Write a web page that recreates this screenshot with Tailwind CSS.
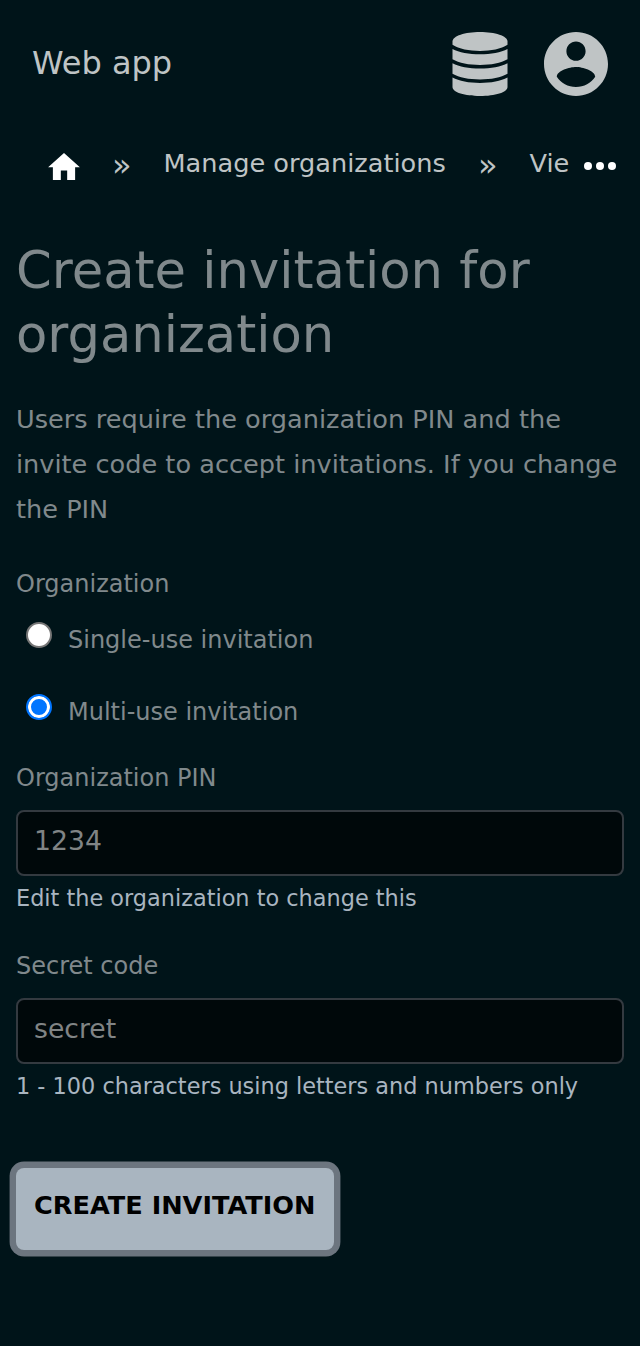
<!DOCTYPE html>
<html lang="en">
<head>
<meta charset="utf-8">
<title>Web app</title>
<script src="https://cdn.jsdelivr.net/npm/@tailwindcss/browser@4"></script>
</head>
<body class="min-h-[1346px] bg-[#001419] font-['DejaVu_Sans',sans-serif] text-[#80898c]">
<header class="flex h-32 items-center justify-between px-8 text-[#bfc4c5]">
  <a class="-mt-[2px] text-[32px] leading-10">Web app</a>
  <div class="flex items-center gap-9">
    <svg class="h-16 w-14" viewBox="0 0 56 64" fill="currentColor">
      <path d="M28 0C43 0 55.500 4 55.500 9.500V12.800C49 17 39 19 28 19S7 17 .5 12.800V9.500C.5 4 13 0 28 0Z"/>
      <path d="M.5 17C7 20.600 17 22.300 28 22.300S49 20.600 55.500 17V27.300C49 31 39 33 28 33S7 31 .5 27.300Z"/>
      <path d="M.5 31.300C7 34.900 17 36.600 28 36.600S49 34.900 55.500 31.300V41.800C49 45.500 39 47.500 28 47.500S7 45.500 .5 41.800Z"/>
      <path d="M.5 45.600C7 49.200 17 51 28 51S49 49.200 55.500 45.600V55C55.500 60.500 43 64 28 64S.5 60.500 .5 55Z"/>
    </svg>
    <svg class="size-16" viewBox="2 2 20 20" fill="currentColor">
      <path d="M12 2C6.480 2 2 6.480 2 12s4.480 10 10 10 10-4.480 10-10S17.520 2 12 2zm0 3c1.660 0 3 1.340 3 3s-1.340 3-3 3-3-1.340-3-3 1.340-3 3-3zm0 14.200c-2.500 0-4.710-1.280-6-3.220.030-1.990 4-3.080 6-3.080 1.990 0 5.970 1.090 6 3.080-1.290 1.940-3.500 3.220-6 3.220z"/>
    </svg>
  </div>
</header>
<nav class="mt-[13px] flex h-[44px] items-center pr-6 pl-12 text-[25.6px] leading-[44px] whitespace-nowrap text-[#bfc4c5]">
  <svg class="mt-[6px] h-[27px] w-8 shrink-0 text-white" viewBox="2 3 20 17" fill="currentColor"><path d="M10 20v-6h4v6h5v-8h3L12 3 2 12h3v8z"/></svg>
  <span class="mt-1 ml-8 w-[51.5px] shrink-0 text-[32px]">»</span>
  <a class="w-[282px] shrink-0">Manage organizations</a>
  <span class="mt-1 ml-[32.5px] w-[52px] shrink-0 text-[32px]">»</span>
  <a class="-ml-[0.5px] w-[54.5px] shrink-0">Vie</a>
  <svg class="mt-[6px] h-2 w-8 shrink-0 text-white" viewBox="0 0 32 8" fill="currentColor"><circle cx="4" cy="4" r="4"/><circle cx="16" cy="4" r="4"/><circle cx="28" cy="4" r="4"/></svg>
</nav>
<main class="px-4 pt-[53px] text-2xl leading-9">
  <h1 class="text-[51.2px] leading-16">Create invitation for organization</h1>
  <p class="mt-[31px] h-[134px] text-[25.6px] leading-[44.8px]">Users require the organization PIN and the invite code to accept invitations. If you change the PIN</p>
  <form class="mt-[35px] flex flex-col items-start">
    <div>Organization</div>
    <label class="mt-5 flex pl-[10px]"><input type="radio" name="kind" class="size-[26px] appearance-none rounded-full border-2 border-[#767676] bg-white"><span class="ml-4">Single-use invitation</span></label>
    <label class="mt-9 flex pl-[10px]"><input type="radio" name="kind" checked class="size-[26px] appearance-none rounded-full border-2 border-[#0075ff] bg-[#0075ff] shadow-[inset_0_0_0_3px_#fff]"><span class="ml-4">Multi-use invitation</span></label>
    <label class="mt-[30px]" for="pin">Organization PIN</label>
    <div id="pin" class="mt-[14px] h-[66px] w-full rounded-lg border-2 border-[#343a40] bg-[#00080a] px-4 pt-[13px] text-[26.667px] leading-[31px] text-[#808485]">1234</div>
    <small class="mt-1 text-[22.4px] text-[#a9b5c0]">Edit the organization to change this</small>
    <label class="mt-8" for="secret">Secret code</label>
    <div id="secret" class="mt-[14px] h-[66px] w-full rounded-lg border-2 border-[#343a40] bg-[#00080a] px-4 pt-[13px] text-[26.667px] leading-[31px] text-[#808485]">secret</div>
    <small class="mt-1 text-[22.4px] text-[#a9b5c0]">1 - 100 characters using letters and numbers only</small>
    <button type="button" class="mt-16 flex h-[82px] w-[318px] rounded-lg bg-[#a9b5c0] pt-[19px] pl-[18px] text-[25.6px] font-bold whitespace-nowrap text-black shadow-[0_0_0_6.4px_#6c757f]">CREATE INVITATION</button>
  </form>
</main>
</body>
</html>
